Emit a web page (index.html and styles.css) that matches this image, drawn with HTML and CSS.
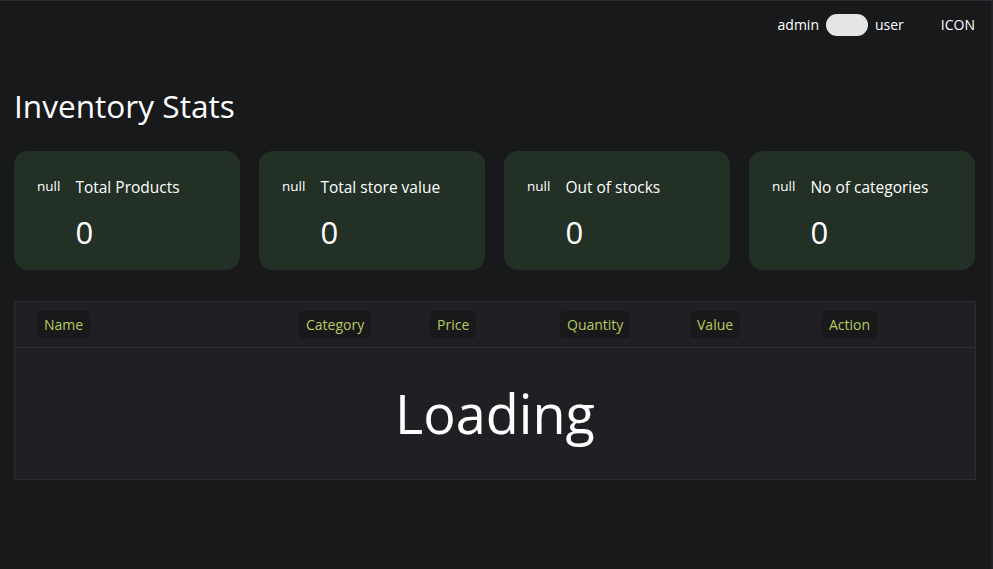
FILE: index.html
```html
<!DOCTYPE html>
<html>
<head>
<meta charset="utf-8">
<link rel="stylesheet" href="styles.css">
</head>
<body>
<div class="app">
  <header class="topbar">
    <div class="role-switch">
      <span class="role">admin</span>
      <span class="toggle"></span>
      <span class="role">user</span>
    </div>
    <span class="icon-label">ICON</span>
  </header>
  <main class="content">
    <h1 class="title">Inventory Stats</h1>
    <section class="cards">
      <div class="card">
        <span class="card-icon">null</span>
        <div class="card-body">
          <div class="card-label">Total Products</div>
          <div class="card-value">0</div>
        </div>
      </div>
      <div class="card">
        <span class="card-icon">null</span>
        <div class="card-body">
          <div class="card-label">Total store value</div>
          <div class="card-value">0</div>
        </div>
      </div>
      <div class="card">
        <span class="card-icon">null</span>
        <div class="card-body">
          <div class="card-label">Out of stocks</div>
          <div class="card-value">0</div>
        </div>
      </div>
      <div class="card">
        <span class="card-icon">null</span>
        <div class="card-body">
          <div class="card-label">No of categories</div>
          <div class="card-value">0</div>
        </div>
      </div>
    </section>
    <section class="table">
      <div class="thead">
        <div class="th"><span class="badge">Name</span></div>
        <div class="th"><span class="badge">Category</span></div>
        <div class="th"><span class="badge">Price</span></div>
        <div class="th"><span class="badge">Quantity</span></div>
        <div class="th"><span class="badge">Value</span></div>
        <div class="th"><span class="badge">Action</span></div>
      </div>
      <div class="tbody">
        <div class="loading">Loading</div>
      </div>
    </section>
  </main>
</div>
</body>
</html>
```
FILE: styles.css
```css
* { box-sizing: border-box; }
html, body {
  margin: 0;
  padding: 0;
  background: #18191b;
  color: #ffffff;
  font-family: "Open Sans", "Noto Sans", "Liberation Sans", sans-serif;
}
.app {
  width: 993px;
  height: 569px;
  border-top: 1px solid #2c2d30;
  border-right: 2px solid #222326;
}
.topbar {
  height: 48px;
  display: flex;
  justify-content: flex-end;
  align-items: center;
  padding: 0 16px 0 0;
  font-size: 14px;
}
.role-switch {
  display: flex;
  align-items: center;
  gap: 7px;
  margin-right: 37px;
}
.role { line-height: 20px; }
.toggle {
  display: block;
  width: 42px;
  height: 22px;
  border-radius: 11px;
  background: #e4e5e7;
}
.icon-label { line-height: 20px; }
.content {
  padding: 0 16px 0 14px;
}
.title {
  margin: 37px 0 25px 0;
  font-size: 31.6px;
  font-weight: 400;
  line-height: 40px;
}
.cards {
  display: grid;
  grid-template-columns: repeat(4, 226px);
  gap: 19px;
}
.card {
  height: 119px;
  background: #233026;
  border-radius: 14px;
  display: flex;
  padding: 26px 0 0 23px;
  gap: 15px;
}
.card-icon {
  font-size: 13.5px;
  line-height: 18px;
}
.card-body { display: flex; flex-direction: column; }
.card-label {
  font-size: 15.5px;
  line-height: 20px;
}
.card-value {
  font-size: 31px;
  line-height: 40px;
  margin-top: 15px;
}
.table {
  margin-top: 31px;
  width: 962px;
  border: 1px solid #2c2d31;
  background: #202024;
}
.thead {
  display: grid;
  grid-template-columns: 262px 131px 130px 130px 132px 1fr;
  padding: 9px 0 9px 22px;
  border-bottom: 1px solid #2c2d31;
}
.th { display: flex; }
.badge {
  display: inline-block;
  background: #19191b;
  color: #b6ca5e;
  font-size: 14px;
  line-height: 27px;
  padding: 0 7px;
  border-radius: 4px;
}
.tbody {
  height: 131px;
  display: flex;
  align-items: center;
  justify-content: center;
}
.loading {
  font-size: 54px;
  line-height: 60px;
  margin-top: -2px;
}
```
